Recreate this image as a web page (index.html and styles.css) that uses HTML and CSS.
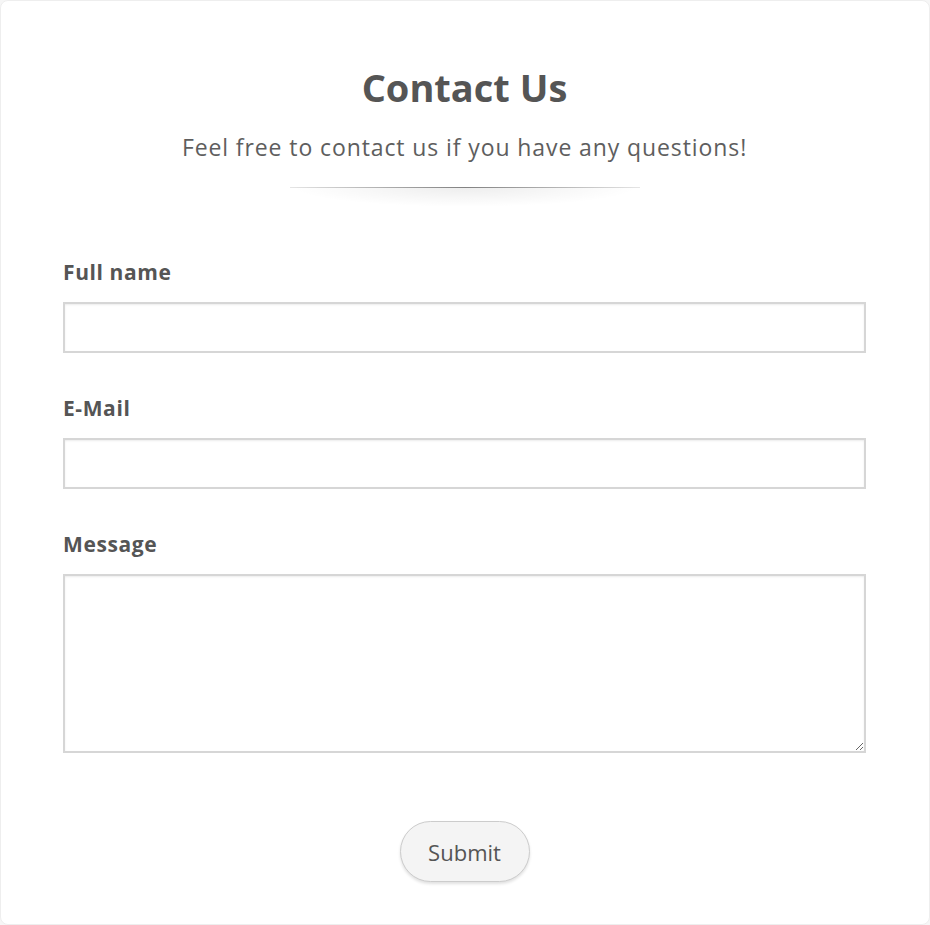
FILE: index.html
```html
<!DOCTYPE html>
<html lang="en">
<head>
    <meta charset="UTF-8">
    <meta name="viewport" content="width=device-width, initial-scale=1.0">
    <title>Contact Us</title>
    <link rel="stylesheet" href="styles.css">
</head>
<body>
    <div class="card">
        <div class="header">
            <h1>Contact Us</h1>
            <p class="lead">Feel free to contact us if you have any questions!</p>
            <div class="divider"></div>
        </div>

        <form class="contact-form" onsubmit="event.preventDefault();">
            <div class="field">
                <label for="name">Full name</label>
                <input type="text" id="name">
            </div>

            <div class="field">
                <label for="email">E-Mail</label>
                <input type="email" id="email">
            </div>

            <div class="field">
                <label for="message">Message</label>
                <textarea id="message"></textarea>
            </div>

            <div class="actions">
                <button type="submit">Submit</button>
            </div>
        </form>
    </div>
</body>
</html>
```

FILE: styles.css
```css
body {
    font-family: "Open Sans", "Noto Sans", sans-serif;
    background-color: #f6f6f6;
    color: #555;
    margin: 0;
    padding: 0;
}
.card {
    background: #fff;
    border: 1px solid #eee;
    border-radius: 8px;
    width: 930px;
    height: 925px;
    box-sizing: border-box;
    padding: 61px 63px 0 62px;
}
.header {
    display: flex;
    flex-direction: column;
    align-items: center;
}
h1 {
    font-size: 38px;
    font-weight: 700;
    margin: 0;
    line-height: 50px;
}
.lead {
    font-size: 23px;
    letter-spacing: 0.9px;
    color: #5e5e5e;
    margin: 20px 0 0;
    line-height: 30px;
}
.divider {
    width: 350px;
    height: 20px;
    margin-top: 25px;
    background:
        linear-gradient(to right, rgba(0, 0, 0, 0.1), rgba(0, 0, 0, 0.45) 50%, rgba(0, 0, 0, 0.1)) top / 100% 1px no-repeat,
        radial-gradient(ellipse at top, rgba(0, 0, 0, 0.07), rgba(0, 0, 0, 0) 70%);
}
.contact-form {
    display: flex;
    flex-direction: column;
    gap: 44px;
    margin-top: 54px;
}
.field {
    display: flex;
    flex-direction: column;
    gap: 19px;
}
label {
    font-size: 21px;
    font-weight: 700;
    letter-spacing: 0.6px;
    line-height: 22px;
}
input,
textarea {
    width: 100%;
    box-sizing: border-box;
    border: 2px solid #d6d6d6;
    box-shadow: inset 0 1px 2px rgba(0, 0, 0, 0.08);
    font-family: inherit;
    font-size: 18px;
    padding: 8px 10px;
    color: #555;
}
input {
    height: 51px;
}
textarea {
    height: 179px;
    resize: vertical;
}
.actions {
    display: flex;
    justify-content: center;
    margin-top: 24px;
}
button {
    width: 130px;
    height: 61px;
    border-radius: 31px;
    border: 1px solid #ccc;
    background-color: #f4f4f4;
    box-shadow: 0 2px 3px rgba(0, 0, 0, 0.12);
    font-family: inherit;
    font-size: 22px;
    color: #555;
    cursor: pointer;
}
```
